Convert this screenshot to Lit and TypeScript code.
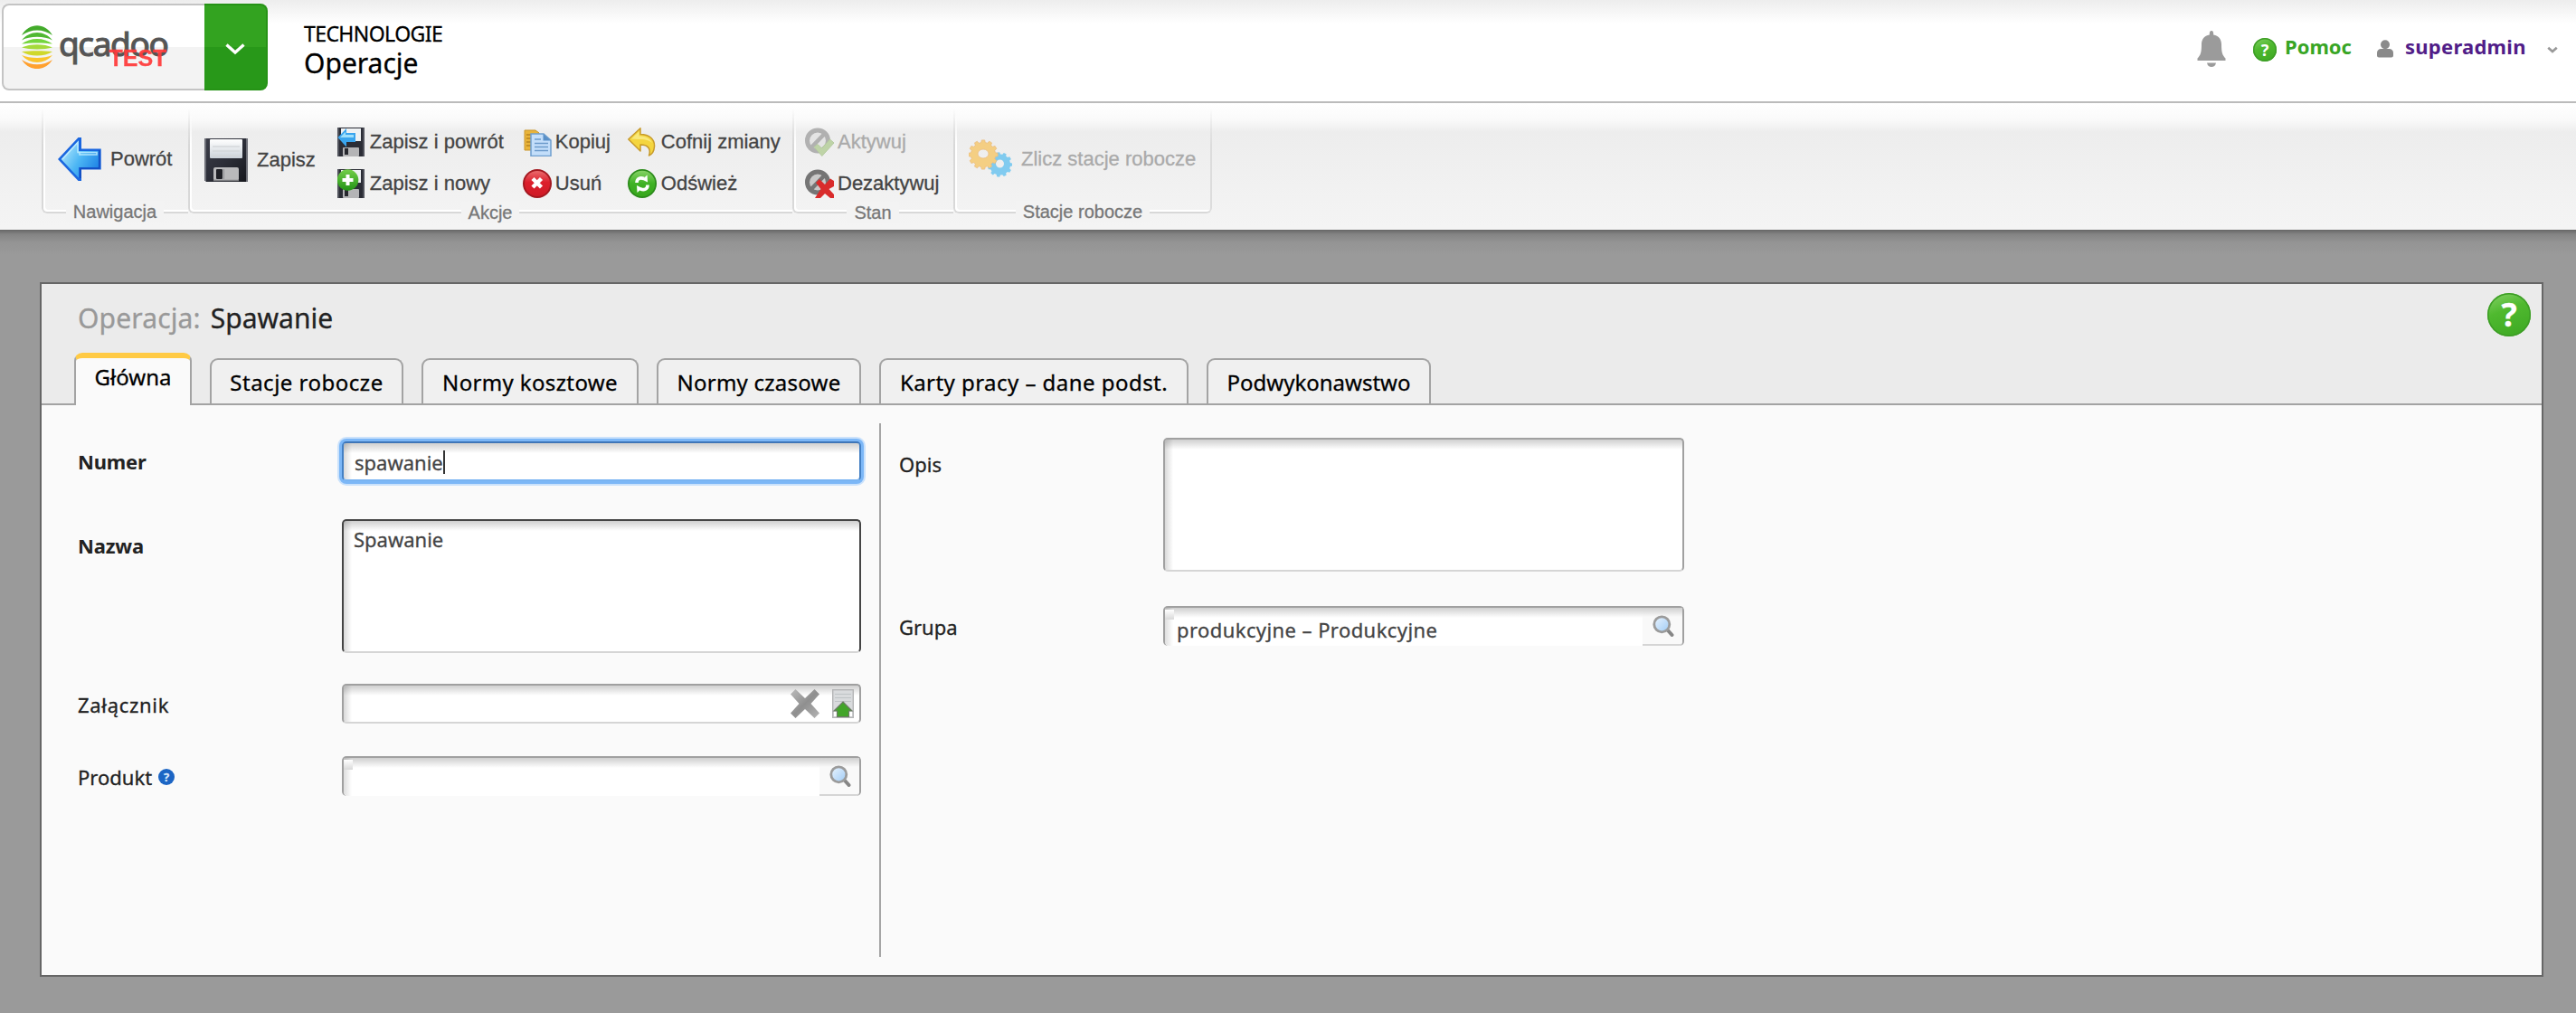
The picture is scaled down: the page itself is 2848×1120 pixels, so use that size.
import { LitElement, html, css, svg, nothing } from "lit";
import type { TemplateResult } from "lit";
import { customElement } from "lit/decorators.js";

const gearPath = (cx: number, cy: number, r: number, teeth: number): string => {
  const pts: string[] = [];
  const step = (Math.PI * 2) / teeth;
  for (let i = 0; i < teeth; i++) {
    const a = i * step;
    for (const [k, rad] of [[-0.32, r * 0.84], [-0.2, r], [0.2, r], [0.32, r * 0.84]]) {
      const t = a + k * step;
      pts.push(`${(cx + rad * Math.cos(t)).toFixed(2)} ${(cy + rad * Math.sin(t)).toFixed(2)}`);
    }
  }
  return `M${pts.join("L")}Z`;
};

const miniDisk = svg`
  <rect x="0" y="0" width="30" height="32" fill="#2b2d36"/>
  <path d="M0 0h2v32H0zM28 0h2v32h-2z" fill="#50525b"/>
  <rect x="4" y="1" width="22" height="14" fill="#eef1f3"/>
  <rect x="6" y="22" width="18" height="10" rx="1" fill="#b4b4b6"/>
  <rect x="8" y="23" width="4" height="7" fill="#26272d"/>`;

const icons: Record<string, TemplateResult> = {
  back: html`<svg class="i48" viewBox="0 0 48 48">
    <defs><linearGradient id="bk" x1="0" y1="0.2" x2="1" y2="0.8"><stop offset="0" stop-color="#b5e9fd"/><stop offset=".5" stop-color="#4cb6f4"/><stop offset="1" stop-color="#1b7fe4"/></linearGradient></defs>
    <path d="M0 24 22.500 0H26V12.500H47.700V35.500H26V48H22.500Z" fill="#1a66df"/>
    <path d="M3.500 24 23 3.200V15H45V33H23V44.800Z" fill="url(#bk)"/>
    <path d="M5 24 22 5.500V16.500H43V19H24V16" fill="none" stroke="#c9f1ff" stroke-width="1.600" opacity=".8"/>
    <path d="M45.800 14V34.200H25V45" fill="none" stroke="#1148b8" stroke-width="1.800" opacity=".75"/></svg>`,
  disk: html`<svg class="i48" viewBox="0 0 48 48">
    <defs><linearGradient id="dk" x1="0" y1="0" x2="1" y2="1"><stop offset="0" stop-color="#3c3e48"/><stop offset=".5" stop-color="#2c2e38"/><stop offset="1" stop-color="#15161c"/></linearGradient>
    <linearGradient id="dl" x1="0" y1="0" x2="0" y2="1"><stop offset="0" stop-color="#fff"/><stop offset="1" stop-color="#cbd2d9"/></linearGradient></defs>
    <path d="M0 0H48V48H2L0 46Z" fill="url(#dk)"/><path d="M0 0H2V47H0ZM46 0H48V48H46Z" fill="#6d6f77"/>
    <rect x="6" y="1" width="36" height="21" rx="1" fill="url(#dl)"/>
    <path d="M9 9H39M9 14H39M9 19H39" stroke="#d3d7da" stroke-width="1.500"/>
    <rect x="10" y="32" width="28" height="15" rx="2" fill="#b9b9bb"/><path d="M10 46.500H38" stroke="#7e7f82" stroke-width="1.500"/>
    <rect x="13" y="34" width="7" height="11" rx="1" fill="#1f2026"/><path d="M21.500 34V45" stroke="#8d8e91"/></svg>`,
  saveBack: html`<svg class="i32" viewBox="0 0 32 32">${miniDisk}
    <path d="M.5 11 10 1V6H20V16H10V21.500Z" fill="#3aa5ee"/><path d="M3 11 9 4.800V8H18V11Z" fill="#9fdffb"/></svg>`,
  saveNew: html`<svg class="i32" viewBox="0 0 32 32">${miniDisk}
    <defs><linearGradient id="sn" x1="0" y1="0" x2="0" y2="1"><stop offset="0" stop-color="#74cf4a"/><stop offset="1" stop-color="#229315"/></linearGradient></defs>
    <circle cx="11.500" cy="12" r="11.800" fill="url(#sn)"/><path d="M11.500 6V18M5.500 12H17.500" stroke="#fff" stroke-width="4"/></svg>`,
  copy: html`<svg class="i32" viewBox="0 0 32 32">
    <path d="M2 3H14L18 6V25H2Z" fill="#e9b43a" stroke="#c9952a"/><path d="M4 8H9M4 12H9M4 16H9M4 20H9" stroke="#b78220" stroke-width="1.400"/>
    <path d="M9 7H23L31 14V31.500H9Z" fill="#c3defa" stroke="#6f9fce" stroke-width="1.500"/><path d="M22.500 7V14.500H31Z" fill="#5a90c7"/>
    <path d="M13 13H20M13 17.500H28M13 21.500H28M13 25.500H28" stroke="#6b9aca" stroke-width="1.500"/></svg>`,
  remove: html`<svg class="i32" viewBox="0 0 32 32">
    <defs><linearGradient id="rm" x1="0" y1="0" x2="0" y2="1"><stop offset="0" stop-color="#ea6a6c"/><stop offset=".45" stop-color="#dc1f2c"/><stop offset="1" stop-color="#cf1a26"/></linearGradient></defs>
    <circle cx="16" cy="16" r="16" fill="#a3181f"/><circle cx="16" cy="16" r="14" fill="url(#rm)"/>
    <path d="M11 10.500 20.500 20M20.500 10.500 11 20" stroke="#fff" stroke-width="4.400"/></svg>`,
  undo: html`<svg class="i32" viewBox="0 0 32 32">
    <path d="M.8 13 14 .8V7.500C24 7.500 30 13 29.500 21 29.200 26 27 29.500 23.500 31 25.500 25 24 19 14 19V26Z" fill="#f4d53f" stroke="#c79a2b" stroke-width="1.500" stroke-linejoin="round"/>
    <path d="M4 12.500 12.500 4.500V9.500C20 9.500 25 12 27 17 23 13.500 18 13 12 13Z" fill="#faec8a" opacity=".8"/></svg>`,
  refresh: html`<svg class="i32" viewBox="0 0 32 32">
    <defs><linearGradient id="rf" x1="0" y1="0" x2="0" y2="1"><stop offset="0" stop-color="#85d265"/><stop offset=".5" stop-color="#3fb224"/><stop offset="1" stop-color="#37a61c"/></linearGradient></defs>
    <circle cx="16" cy="16" r="16" fill="#2b8a1a"/><circle cx="16" cy="16" r="14.300" fill="url(#rf)"/>
    <path d="M10 15C10 10 14 9 18 10.500" fill="none" stroke="#fff" stroke-width="3.600"/><path d="M16 11.500 21.500 6.500 22 14.500Z" fill="#fff"/>
    <path d="M22 17.500C22 22.500 18 23.500 14 22" fill="none" stroke="#fff" stroke-width="3.600"/><path d="M16 21 10.500 26 10 18Z" fill="#fff"/></svg>`,
  activate: html`<svg class="i32 dim" viewBox="0 0 32 32">
    <circle cx="14" cy="14.500" r="11.500" fill="#dcdcdc" stroke="#757575" stroke-width="5"/><path d="M6.500 22.500 21.500 7" stroke="#757575" stroke-width="4.500"/>
    <path d="M10 21.500 14 18.500 18.500 23 27.500 13 32 17 18.800 31.500Z" fill="#90ba62" stroke="#7ba552"/></svg>`,
  deactivate: html`<svg class="i32" viewBox="0 0 32 32">
    <circle cx="14" cy="14.500" r="11.500" fill="#c9c9c9" stroke="#757575" stroke-width="5"/><path d="M6.500 22.500 21.500 7" stroke="#757575" stroke-width="4.500"/>
    <path d="M12 15 16 11 22 17 28 10.500 32 13V19L26.500 22 32 28V32H28L22 27 17 32H11L17.500 22Z" fill="#d92b2b"/></svg>`,
  gears: html`<svg class="i48 dimmer" viewBox="0 0 48 48">
    <path d="${gearPath(34.5, 30, 13.8, 11)}M39 29a4.500 4.500 0 1 0-9 0 4.500 4.500 0 1 0 9 0Z" fill="#27aef0" fill-rule="evenodd"/>
    <path d="${gearPath(16, 19, 16.2, 12)}M22 18a6 5 0 1 0-12 0 6 5 0 1 0 12 0Z" fill="#f9b52c" fill-rule="evenodd" stroke="#e8962a" stroke-width=".8"/></svg>`,
  bell: html`<svg class="bell" viewBox="0 0 32 40"><path d="M16 0C17.800 0 18.300 1.500 18.200 4.500 24 5.500 27 9.500 27 15 27 24 28 27 31.500 30.500V33H.5V30.500C4 27 5 24 5 15 5 9.500 8 5.500 13.800 4.500 13.700 1.500 14.200 0 16 0Z" fill="#9b9b9b"/><path d="M11 35.500H21C20.500 38.500 18.500 40 16 40S11.500 38.500 11 35.500Z" fill="#9b9b9b"/></svg>`,
  user: html`<svg class="user" viewBox="0 0 18 20"><circle cx="9" cy="5.200" r="5" fill="#8a8a8a"/><path d="M0 14.500C0 11.500 2 10 4.500 10H13.500C16 10 18 11.500 18 14.500V17.500C18 18.800 17 19.500 16 19.500H2C1 19.500 0 18.800 0 17.500Z" fill="#8a8a8a"/></svg>`,
  clear: html`<svg class="clear" viewBox="0 0 32 32"><defs><linearGradient id="cl" x1="0" y1="0" x2="1" y2="1"><stop offset="0" stop-color="#bcbcbc"/><stop offset=".5" stop-color="#8f8f8f"/><stop offset="1" stop-color="#b5b5b5"/></linearGradient></defs>
    <path d="M5.500 0 16 10 26.500 0 32 5.500 22.500 16 32 26.500 26.500 32 16 22 5.500 32 0 26.500 9.500 16 0 5.500Z" fill="url(#cl)"/></svg>`,
  upload: html`<svg class="upload" viewBox="0 0 24 32"><rect x=".7" y=".7" width="22.600" height="30.600" fill="#d9dbdd" stroke="#b4b5b6" stroke-width="1.400"/>
    <path d="M3 5.500H21M3 9.500H21M3 13.500H21" stroke="#bfc3c6"/><path d="M2 25H6V30H2ZM18 25H22V30H18Z" fill="#fff"/>
    <path d="M12 14 22 24H18.500V30.500H5.500V24H2Z" fill="#43a52a" stroke="#6d7b67" stroke-width="1.200"/></svg>`,
  search: html`<svg class="search" viewBox="0 0 24 24"><defs><linearGradient id="ms" x1="0" y1="0" x2="1" y2="1"><stop offset="0" stop-color="#eaf4fe"/><stop offset="1" stop-color="#9fcbf5"/></linearGradient></defs>
    <path d="M17 17 21.500 22" stroke="#868686" stroke-width="4" stroke-linecap="round"/><circle cx="10.300" cy="10.300" r="8.500" fill="url(#ms)" stroke="#9b9b9b" stroke-width="2.800"/></svg>`,
};

interface Action { icon: string; label: string; off?: boolean }
interface Group { name: string; cls: string; big?: Action; small?: Action[] }

const groups: Group[] = [
  { name: "Nawigacja", cls: "g-nav", big: { icon: "back", label: "Powrót" } },
  { name: "Akcje", cls: "g-act", big: { icon: "disk", label: "Zapisz" }, small: [
    { icon: "saveBack", label: "Zapisz i powrót" }, { icon: "copy", label: "Kopiuj" }, { icon: "undo", label: "Cofnij zmiany" },
    { icon: "saveNew", label: "Zapisz i nowy" }, { icon: "remove", label: "Usuń" }, { icon: "refresh", label: "Odśwież" } ] },
  { name: "Stan", cls: "g-state", small: [{ icon: "activate", label: "Aktywuj", off: true }, { icon: "deactivate", label: "Dezaktywuj" }] },
  { name: "Stacje robocze", cls: "g-work", big: { icon: "gears", label: "Zlicz stacje robocze", off: true } },
];

const tabs = [
  { label: "Główna", cls: "t0 active" }, { label: "Stacje robocze", cls: "t1" }, { label: "Normy kosztowe", cls: "t2" },
  { label: "Normy czasowe", cls: "t3" }, { label: "Karty pracy – dane podst.", cls: "t4" }, { label: "Podwykonawstwo", cls: "t5" },
];

@customElement("app-root")
class AppRoot extends LitElement {
  static styles = css`
    :host { display: block; font-family: "Noto Sans", "Open Sans", sans-serif; color: #222; -webkit-text-stroke: .3px; }
    * { box-sizing: border-box; }
    svg { display: block; flex: none; }
    .page { display: flex; flex-direction: column; height: 1120px; background: #9a9a9a; overflow: hidden; }
    .header { display: flex; height: 114px; flex: none; padding: 4px 20px 0 2px; border-bottom: 2px solid #bbb; background: linear-gradient(#ededed 0, #fff 26px); }
    .brand { display: flex; width: 294px; height: 96px; }
    .logo { display: flex; width: 224px; padding: 22px 0 0 20px; border: 2px solid #c4c4c4; border-right: 0; border-radius: 8px 0 0 8px; background: linear-gradient(#fff 46px, #f3f3f3 46px); }
    .mark { width: 34px; height: 48px; }
    .word { display: grid; margin-left: 7px; height: 48px; }
    .word span { grid-area: 1 / 1; white-space: nowrap; }
    .name { font-size: 37px; line-height: 40px; letter-spacing: -1.4px; color: #555; -webkit-text-stroke: 1.1px #555; }
    .test { font: bold 25px/26px "Liberation Sans", sans-serif; color: #ff3b3b; justify-self: end; align-self: end; margin: 0 1px -1px 0; opacity: .93; }
    .drop { display: flex; align-items: center; justify-content: center; width: 70px; border: 2px solid #269316; border-left: 0; border-radius: 0 8px 8px 0; background: linear-gradient(#33a320 46px, #289819 46px); }
    .drop svg { margin-top: 4px; }
    .titles { margin-left: 40px; padding-top: 17px; color: #000; }
    .module { font-size: 23px; line-height: 33px; letter-spacing: -.58px; }
    .view { font-size: 30px; line-height: 32px; }
    .account { display: flex; margin-left: auto; height: 96px; color: #511d88; font-weight: 700; font-size: 22px; line-height: 30px; -webkit-text-stroke: 0; }
    .bell { width: 32px; height: 40px; margin: 30px 30px 0 0; }
    .ball { display: flex; align-items: center; justify-content: center; flex: none; border-radius: 50%; color: #fff; font-weight: 700; }
    .green { background: linear-gradient(160deg, #86d267 0, #4fb92f 40%, #3ca722 100%); box-shadow: inset 0 0 0 1.500px #3d9d26; }
    .b26 { width: 26px; height: 26px; margin: 38px 9px 0 0; font-size: 18px; line-height: 26px; }
    .b48 { width: 48px; height: 48px; font-size: 36px; line-height: 48px; }
    .b18 { width: 18px; height: 18px; margin-left: 7px; background: #1c65c4; font-size: 13px; line-height: 18px; color: #d9e8fb; }
    .help { color: #38a524; padding-top: 32px; width: 102px; }
    .user { width: 18px; height: 20px; margin: 40px 13px 0 0; }
    .who { padding-top: 32px; width: 157px; letter-spacing: .25px; }
    .account .chev { margin-top: 47px; }

    .ribbon { display: flex; flex: none; height: 140px; padding-left: 46px; font-family: "Liberation Sans", Arial, sans-serif; background: linear-gradient(#fff 0, #fafafa 18px, #ededed 32px, #f4f4f4 136px); color: #444; }
    .group { position: relative; display: flex; flex-direction: column; align-items: center; height: 132px; }
    .group::before { content: ""; position: absolute; inset: 6px 0 10px 0; border: 2px solid #d8d8d8; border-top: 0; border-right: 0; border-radius: 0 0 0 6px; box-shadow: inset 2px -2px 0 #fff; mask: linear-gradient(transparent, #000 40px); }
    .g-work::before { border-right: 2px solid #dcdcdc; border-radius: 0 0 6px 6px; }
    .g-nav { width: 162px; } .g-act { width: 668px; } .g-state { width: 178px; } .g-work { width: 286px; }
    .tools { position: relative; display: flex; align-items: center; width: 100%; height: 96px; padding-top: 29px; }
    .g-nav .tools { padding-left: 18px; } .g-act .tools { padding-left: 18px; } .g-state .tools { padding-left: 14px; } .g-work .tools { padding-left: 17px; }
    .big { display: flex; align-items: center; gap: 10px; height: 66px; font-size: 22px; line-height: 26px; white-space: nowrap; }
    .smalls { display: grid; grid-auto-rows: 32px; row-gap: 14px; margin-top: 7px; }
    .g-act .smalls { grid-template-columns: 205px 116px auto; margin-left: 24px; }
    .small { display: flex; align-items: center; gap: 4px; font-size: 22px; line-height: 26px; white-space: nowrap; }
    .g-act .small:nth-child(3n) { gap: 5px; }
    .off { color: #aaa; }
    .caption { position: relative; margin-top: 13px; padding: 0 8px; height: 24px; font-size: 20px; line-height: 24px; color: #777; background: #f3f3f3; }
    .i48 { width: 48px; height: 48px; } .i32 { width: 32px; height: 32px; }
    .dim { opacity: .5; } .dimmer { opacity: .55; }

    .main { flex: 1; padding: 58px 36px 40px 44px; background: linear-gradient(#666 0, #848484 5px, #949494 14px, #9a9a9a 28px); }
    .panel { height: 768px; border: 2px solid #666; background: #fafafa; display: flex; flex-direction: column; }
    .head { display: flex; flex-direction: column; height: 134px; flex: none; background: #ebebeb; border-bottom: 2px solid #a3a3a3; }
    .bar { display: flex; justify-content: space-between; height: 76px; padding: 10px 12px 0 40px; }
    .heading { display: flex; gap: 11px; padding-top: 7px; font-size: 30px; line-height: 42px; }
    .kind { color: #999; letter-spacing: .15px; }
    .tabs { display: flex; align-items: flex-end; gap: 20px; height: 58px; padding-left: 36px; }
    .tab { height: 50px; border: 2px solid #a3a3a3; border-bottom: 0; border-radius: 9px 9px 0 0; background: #f0f0f0; font-size: 24px; line-height: 48px; padding-top: 1px; text-align: center; color: #000; white-space: nowrap; }
    .t0 { width: 130px; } .t1 { width: 214px; letter-spacing: .5px; } .t2 { width: 240px; letter-spacing: .36px; } .t3 { width: 226px; letter-spacing: .25px; } .t4 { width: 342px; letter-spacing: .46px; } .t5 { width: 248px; }
    .tab.active { height: 58px; margin-bottom: -2px; border-top: 6px solid #ffca44; background: #fafafa; line-height: 42px; padding-top: 0; }
    .active { position: relative; }

    .form { display: flex; flex: 1; }
    .col { display: flex; flex-direction: column; padding-left: 40px; }
    .left { width: 926px; height: 610px; padding-top: 40px; }
    .rule { width: 2px; height: 590px; margin-top: 20px; background: #a5a5a5; }
    .right { padding: 36px 0 0 20px; }
    .row { display: grid; grid-template-columns: 292px 574px; font-size: 22px; }
    .right .row { grid-template-columns: 292px 576px; }
    .row + .row { margin-top: 36px; }
    .left .row:nth-child(2) { margin-top: 42px; } .left .row:nth-child(3) { margin-top: 34px; }
    .right .row + .row { margin-top: 38px; }
    .label { display: flex; align-items: center; height: 44px; padding-top: 2px; line-height: 30px; }
    .tall .label { height: 58px; padding-top: 0; }
    .label.req { font-weight: 700; letter-spacing: -.2px; padding-top: 0; -webkit-text-stroke: 0; }
    .wide { letter-spacing: .7px; }
    .field { display: flex; height: 44px; border: 2px solid #a0a0a0; border-bottom-color: #d5d5d5; border-radius: 5px; padding-left: 11px; line-height: 43px; color: #444;
      background: linear-gradient(rgba(0,0,0,.19), transparent 11px), linear-gradient(90deg, rgba(0,0,0,.15), transparent 9px), #fff; background-clip: padding-box; }
    .tall .field { height: 148px; line-height: 40px; }
    .dark { border-color: #444 #444 #d5d5d5; }
    .focus { border-color: #3f76b8 #4480c4 #79b4f2; box-shadow: 0 0 0 3px #7cb7f7, 0 0 0 5px #cbe2fb; padding-left: 12px; }
    .caret { width: 2px; height: 26px; margin: 8px 0 0 0; background: #333; }
    .file { align-items: center; padding-right: 6px; justify-content: flex-end; }
    .clear { width: 32px; height: 32px; margin-right: 14px; } .upload { width: 24px; height: 32px; }
    .lookup { padding: 0; border-bottom: 0; background: none; line-height: 48px; letter-spacing: .42px; }
    .entry { flex: 1; padding-left: 13px; border-radius: 0 0 0 5px;
      background: linear-gradient(#fff, #d9d9d9) 0 2px / 10px 11px no-repeat, linear-gradient(rgba(0,0,0,.19), transparent 11px), linear-gradient(90deg, rgba(0,0,0,.13), transparent 9px), #fff; }
    .glass { display: flex; justify-content: center; width: 44px; padding: 8px 0 0 1px; border-bottom: 2px solid #d5d5d5; border-radius: 0 0 4px 0; background: linear-gradient(rgba(0,0,0,.17), transparent 10px), #f9f9f9; }
    .search { width: 24px; height: 24px; }
  `;

  private action(a: Action, cls: string) {
    return html`<div class="${cls} ${a.off ? "off" : ""}">${icons[a.icon]}<span>${a.label}</span></div>`;
  }

  private chevron(w: number, h: number, color: string, stroke: number) {
    return html`<svg class="chev" width=${w} height=${h} viewBox="0 0 24 14"><path d="M2.500 2.500 12 11 21.500 2.500" fill="none" stroke=${color} stroke-width=${stroke}/></svg>`;
  }

  render() {
    return html`<div class="page">
      <header class="header">
        <div class="brand">
          <div class="logo">
            <svg class="mark" viewBox="0 0 34 48">
              <path d="M0 11C8-3.500 26-3.500 34 11 24 3.500 10 3.500 0 11Z" fill="#43ab2b"/>
              <path d="M0 16.500C9 5 25 5 34 16.500 25 11.500 9 11.500 0 16.500Z" fill="#4fb832"/>
              <path d="M0 20.500C9 13 25 13 34 20.500 25 19 9 19 0 20.500Z" fill="#74d53d"/>
              <path d="M0 24.500C9 20 25 20 34 24.500 25 27 9 27 0 24.500Z" fill="#a5da3b"/>
              <path d="M0 29C9 28 25 28 34 29 25 35 9 35 0 29Z" fill="#cfd82c"/>
              <path d="M0 33C9 37 25 37 34 33 25 43.500 9 43.500 0 33Z" fill="#fac32c"/>
              <path d="M0 38C10 45 24 45 34 38 26 51.500 8 51.500 0 38Z" fill="#ffa02e"/>
            </svg>
            <div class="word"><span class="name">qcadoo</span><span class="test">TEST</span></div>
          </div>
          <div class="drop">${this.chevron(24, 14, "#fff", 3.4)}</div>
        </div>
        <div class="titles"><div class="module">TECHNOLOGIE</div><div class="view">Operacje</div></div>
        <div class="account">
          ${icons.bell}<span class="ball green b26">?</span><span class="help">Pomoc</span>
          ${icons.user}<span class="who">superadmin</span>${this.chevron(12, 8, "#999", 5.5)}
        </div>
      </header>
      <nav class="ribbon">
        ${groups.map((g) => html`<div class="group ${g.cls}">
          <div class="tools">${g.big ? this.action(g.big, "big") : nothing}
            ${g.small ? html`<div class="smalls">${g.small.map((a) => this.action(a, "small"))}</div>` : nothing}</div>
          <div class="caption">${g.name}</div>
        </div>`)}
      </nav>
      <main class="main">
        <section class="panel">
          <div class="head">
            <div class="bar"><div class="heading"><span class="kind">Operacja:</span><span>Spawanie</span></div><span class="ball green b48">?</span></div>
            <div class="tabs">${tabs.map((t) => html`<div class="tab ${t.cls}">${t.label}</div>`)}</div>
          </div>
          <div class="form">
            <div class="col left">
              <div class="row"><div class="label req">Numer</div><div class="field focus">spawanie<span class="caret"></span></div></div>
              <div class="row tall"><div class="label req">Nazwa</div><div class="field dark">Spawanie</div></div>
              <div class="row"><div class="label wide">Załącznik</div><div class="field file">${icons.clear}${icons.upload}</div></div>
              <div class="row"><div class="label">Produkt<span class="ball b18">?</span></div><div class="field lookup"><div class="entry"></div><div class="glass">${icons.search}</div></div></div>
            </div>
            <div class="rule"></div>
            <div class="col right">
              <div class="row tall"><div class="label">Opis</div><div class="field"></div></div>
              <div class="row"><div class="label">Grupa</div><div class="field lookup"><div class="entry">produkcyjne – Produkcyjne</div><div class="glass">${icons.search}</div></div></div>
            </div>
          </div>
        </section>
      </main>
    </div>`;
  }
}
